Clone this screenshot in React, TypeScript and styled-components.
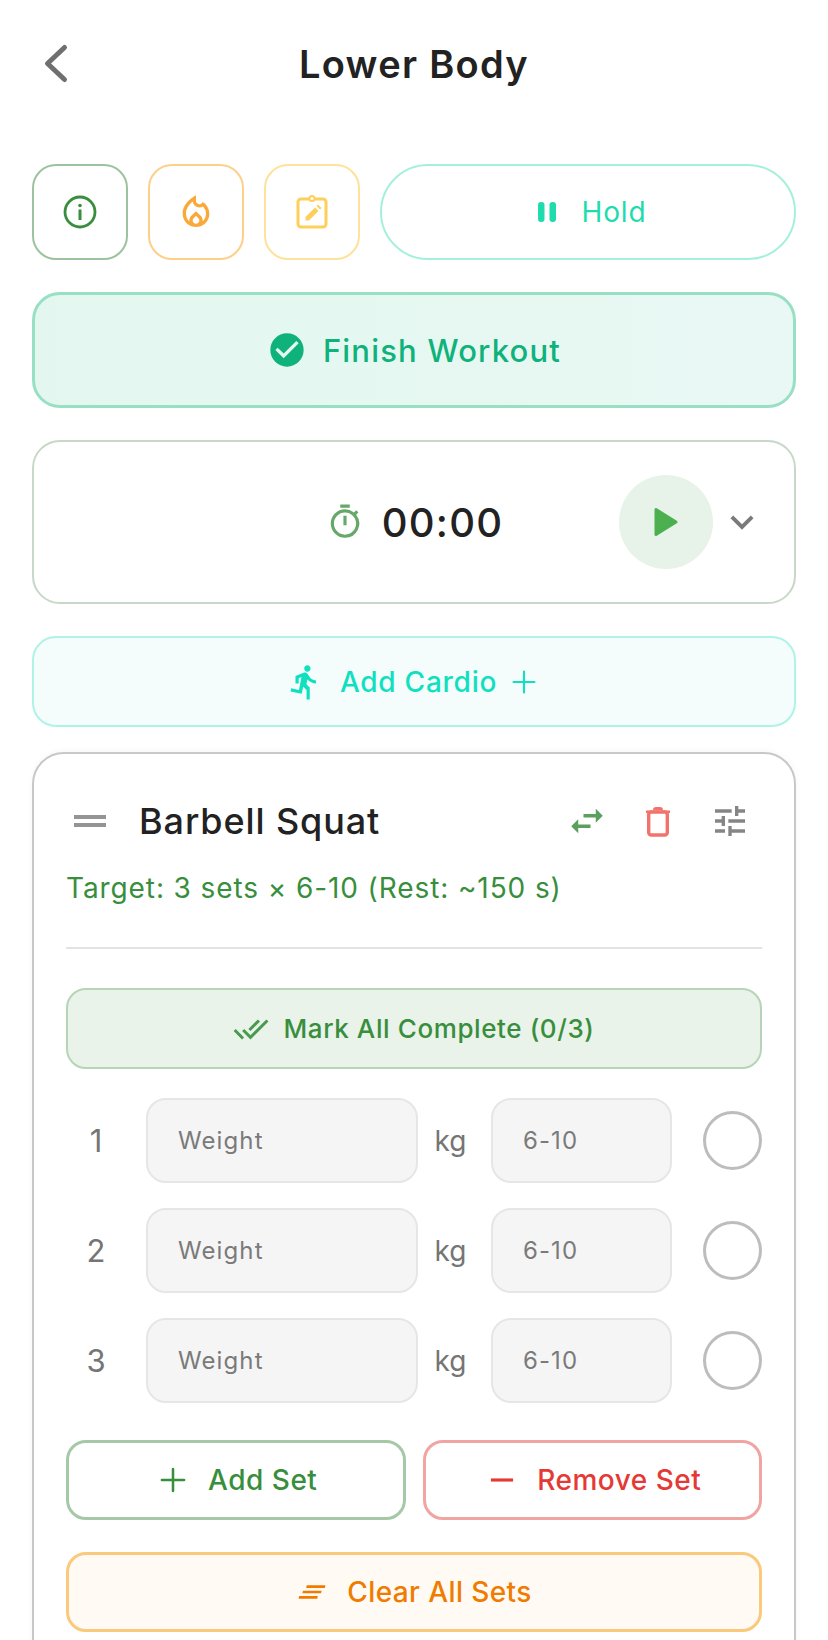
import React from "react";
import styled, { createGlobalStyle } from "styled-components";
import { Plus } from "lucide-react";
import {
  MdCheckCircle,
  MdClearAll,
  MdDirectionsRun,
  MdDoneAll,
  MdDragHandle,
  MdExpandMore,
  MdOutlineLocalFireDepartment,
  MdOutlineTimer,
  MdRemove,
  MdSwapHoriz,
  MdTune,
} from "react-icons/md";

const FONT = `Inter, "Noto Sans", "Liberation Sans", sans-serif`;

const GlobalStyle = createGlobalStyle`
  html, body {
    margin: 0;
    padding: 0;
    background: #fff;
    overflow: hidden;
  }
  * {
    box-sizing: border-box;
  }
`;

const SETS = [1, 2, 3];

const BackIcon = () => (
  <svg width="30" height="42" viewBox="0 0 30 42" fill="none">
    <path d="M23.5 4.5 L6.5 20.5 L23.5 36.5" stroke="#6f6f6f" strokeWidth="5" strokeLinecap="round" strokeLinejoin="round" />
  </svg>
);

const InfoIcon = () => (
  <svg width="36" height="36" viewBox="0 0 36 36" fill="none">
    <circle cx="18" cy="18" r="15" stroke="#388e3c" strokeWidth="2.8" />
    <circle cx="18" cy="11.5" r="1.8" fill="#388e3c" />
    <rect x="16.5" y="15.5" width="3" height="10.5" fill="#388e3c" />
  </svg>
);

const NoteIcon = () => (
  <svg width="36" height="36" viewBox="0 0 36 36" fill="none">
    <rect x="4" y="5" width="28" height="28" rx="3" stroke="#fcd05a" strokeWidth="3" />
    <circle cx="18" cy="4.5" r="2.6" stroke="#fcd05a" strokeWidth="2" fill="#fff" />
    <path d="M11.5 26.5 v-3.5 L21 13.5 l3.5 3.5 L15 26.5 z M22.5 12 l1.5 -1.5 l3.5 3.5 l-1.5 1.5 z" fill="#fcd05a" />
  </svg>
);

const PauseIcon = () => (
  <svg width="20" height="22" viewBox="0 0 20 22" fill="#1fdcae">
    <rect x="1" y="1" width="6.5" height="20" rx="3" />
    <rect x="12.5" y="1" width="6.5" height="20" rx="3" />
  </svg>
);

const PlayIcon = () => (
  <svg width="30" height="34" viewBox="0 0 30 34" fill="#4caf50" stroke="#4caf50" strokeWidth="3" strokeLinejoin="round">
    <path d="M5 4.5 V29.5 L25 17 z" />
  </svg>
);

const TrashIcon = () => (
  <svg width="28" height="32" viewBox="0 0 28 32" fill="none">
    <path d="M1 5.5 H25 V8 H1 z M8 5 Q8 2 11 2 H15 Q18 2 18 5 z" fill="#f2726c" />
    <rect x="3.7" y="7" width="18.6" height="23" rx="2.5" stroke="#f2726c" strokeWidth="3.4" />
  </svg>
);

export default function App() {
  return (
    <Page>
      <GlobalStyle />
      <Header>
        <BackButton>
          <BackIcon />
        </BackButton>
        <Title>Lower Body</Title>
      </Header>

      <Content>
        <ActionRow>
          <SquareButton $border="#9cc29e">
            <InfoIcon />
          </SquareButton>
          <SquareButton $border="#fdd08a">
            <MdOutlineLocalFireDepartment size={40} color="#f9a93a" />
          </SquareButton>
          <SquareButton $border="#fde29c">
            <NoteIcon />
          </SquareButton>
          <HoldButton>
            <PauseIcon />
            Hold
          </HoldButton>
        </ActionRow>

        <FinishButton>
          <MdCheckCircle size={40} color="#10b27c" />
          Finish Workout
        </FinishButton>

        <TimerCard>
          <span />
          <TimerGroup>
            <MdOutlineTimer size={38} color="#66a76a" />
            <TimerText>00:00</TimerText>
          </TimerGroup>
          <TimerControls>
            <PlayButton>
              <PlayIcon />
            </PlayButton>
            <MdExpandMore size={46} color="#7a7a7a" />
          </TimerControls>
        </TimerCard>

        <CardioButton>
          <MdDirectionsRun size={38} color="#10e0c0" />
          <span>Add Cardio</span>
          <CardioPlus>
            <Plus size={36} color="#10e0c0" strokeWidth={1.4} />
          </CardioPlus>
        </CardioButton>

        <ExerciseCard>
          <ExerciseHeader>
            <MdDragHandle size={48} color="#949494" />
            <ExerciseName>Barbell Squat</ExerciseName>
            <ExerciseTools>
              <MdSwapHoriz size={42} color="#5a9f5e" />
              <TrashIcon />
              <MdTune size={40} color="#858585" />
            </ExerciseTools>
          </ExerciseHeader>
          <TargetText>Target: 3 sets × 6-10 (Rest: ~150 s)</TargetText>
          <Divider />

          <MarkAllButton>
            <MdDoneAll size={36} color="#4a9a4e" />
            Mark All Complete (0/3)
          </MarkAllButton>

          <SetList>
            {SETS.map((n) => (
              <SetRow key={n}>
                <SetNumber>{n}</SetNumber>
                <SetInput placeholder="Weight" readOnly />
                <Unit>kg</Unit>
                <SetInput placeholder="6-10" readOnly />
                <CheckCircle />
              </SetRow>
            ))}
          </SetList>

          <SetButtons>
            <OutlineButton $border="#a5c9a6" $color="#388e3c">
              <Plus size={38} strokeWidth={1.6} />
              Add Set
            </OutlineButton>
            <OutlineButton $border="#f0a5a2" $color="#e53935">
              <MdRemove size={38} />
              Remove Set
            </OutlineButton>
          </SetButtons>

          <ClearButton>
            <MdClearAll size={32} style={{ transform: "skewX(-12deg)" }} />
            Clear All Sets
          </ClearButton>
        </ExerciseCard>
      </Content>
    </Page>
  );
}

const Page = styled.div`
  width: 828px;
  height: 1640px;
  overflow: hidden;
  background: #fff;
  font-family: ${FONT};
`;

const Header = styled.header`
  display: flex;
  align-items: center;
  justify-content: center;
  position: relative;
  height: 128px;
`;

const BackButton = styled.div`
  position: absolute;
  left: 41px;
  top: 43px;
  display: flex;
`;

const Title = styled.h1`
  margin: 0;
  font-size: 38px;
  font-weight: 600;
  letter-spacing: 1.3px;
  color: #222;
`;

const Content = styled.main`
  display: flex;
  flex-direction: column;
  padding: 36px 32px 0;
`;

const ActionRow = styled.div`
  display: flex;
  gap: 20px;
  height: 96px;
`;

const SquareButton = styled.div<{ $border: string }>`
  flex: none;
  display: flex;
  align-items: center;
  justify-content: center;
  width: 96px;
  height: 96px;
  border: 2px solid ${(p) => p.$border};
  border-radius: 24px;
  background: #fff;
`;

const HoldButton = styled.div`
  flex: 1;
  display: flex;
  align-items: center;
  justify-content: center;
  gap: 24px;
  padding-left: 8px;
  border: 2px solid #a5f0dc;
  border-radius: 48px;
  font-size: 28px;
  letter-spacing: 0.9px;
  color: #1fdcae;
`;

const FinishButton = styled.div`
  display: flex;
  align-items: center;
  justify-content: center;
  gap: 16px;
  height: 116px;
  margin-top: 32px;
  border: 3px solid #98e0c4;
  border-radius: 28px;
  background: linear-gradient(90deg, #e3f7f0, #e9f8f4);
  font-size: 31px;
  font-weight: 550;
  letter-spacing: 1.2px;
  color: #10b27c;
`;

const TimerCard = styled.section`
  display: grid;
  grid-template-columns: 1fr auto 1fr;
  align-items: center;
  height: 164px;
  margin-top: 32px;
  padding: 0 29px 0 30px;
  border: 2px solid #c8d8c8;
  border-radius: 28px;
`;

const TimerGroup = styled.div`
  display: flex;
  align-items: center;
  gap: 18px;
`;

const TimerText = styled.div`
  font-size: 40px;
  font-weight: 500;
  letter-spacing: 1.2px;
  color: #222;
`;

const TimerControls = styled.div`
  display: flex;
  align-items: center;
  justify-content: flex-end;
  gap: 6px;
`;

const PlayButton = styled.div`
  display: flex;
  align-items: center;
  justify-content: center;
  width: 94px;
  height: 94px;
  border-radius: 50%;
  background: #e7f3e8;
`;

const CardioButton = styled.div`
  display: flex;
  align-items: center;
  justify-content: center;
  gap: 16px;
  height: 91px;
  margin-top: 32px;
  border: 2px solid #aef3e6;
  border-radius: 24px;
  background: #f4fdfc;
  font-size: 28px;
  font-weight: 500;
  letter-spacing: 0.75px;
  color: #10e0c0;
`;

const CardioPlus = styled.span`
  display: flex;
  margin-left: -7px;
`;

const ExerciseCard = styled.section`
  display: flex;
  flex-direction: column;
  margin-top: 25px;
  padding: 33px 32px 40px;
  border: 2px solid #c8c8c8;
  border-radius: 32px;
  box-shadow: 0 -1px 6px rgba(0, 0, 0, 0.04);
`;

const ExerciseHeader = styled.div`
  display: flex;
  align-items: center;
  height: 68px;
`;

const ExerciseName = styled.h2`
  flex: 1;
  margin: 0 0 0 25px;
  font-size: 36px;
  font-weight: 500;
  letter-spacing: 0.9px;
  color: #222;
`;

const ExerciseTools = styled.div`
  display: flex;
  align-items: center;
  gap: 37px;
  padding-right: 12px;
`;

const TargetText = styled.div`
  margin-top: 16px;
  font-size: 28px;
  letter-spacing: 0.9px;
  color: #388e3c;
`;

const Divider = styled.hr`
  width: 100%;
  margin: 42px 0 0;
  border: 0;
  border-top: 2px solid #e3e3e3;
`;

const MarkAllButton = styled.div`
  display: flex;
  align-items: center;
  justify-content: center;
  gap: 14px;
  height: 81px;
  margin-top: 39px;
  border: 2px solid #b5d5b6;
  border-radius: 20px;
  background: #e9f3ea;
  font-size: 26px;
  font-weight: 500;
  letter-spacing: 0.6px;
  color: #388e3c;
`;

const SetList = styled.div`
  display: flex;
  flex-direction: column;
  gap: 25px;
  margin-top: 29px;
`;

const SetRow = styled.div`
  display: grid;
  grid-template-columns: 80px 272px 73px 181px 1fr;
  align-items: center;
`;

const SetNumber = styled.div`
  width: 60px;
  text-align: center;
  font-size: 31px;
  color: #757575;
`;

const SetInput = styled.input`
  width: 100%;
  height: 85px;
  padding: 0 30px;
  border: 2px solid #e6e6e6;
  border-radius: 20px;
  outline: none;
  background: #f5f5f5;
  font-family: ${FONT};
  font-size: 24px;
  letter-spacing: 1.1px;

  &::placeholder {
    color: #7a7a7a;
    opacity: 1;
  }
`;

const Unit = styled.div`
  padding-right: 8px;
  text-align: center;
  font-size: 28px;
  color: #757575;
`;

const CheckCircle = styled.div`
  justify-self: end;
  width: 59px;
  height: 59px;
  border: 3px solid #bdbdbd;
  border-radius: 50%;
`;

const SetButtons = styled.div`
  display: grid;
  grid-template-columns: 1fr 1fr;
  gap: 17px;
  margin-top: 37px;
`;

const OutlineButton = styled.div<{ $border: string; $color: string }>`
  display: flex;
  align-items: center;
  justify-content: center;
  gap: 16px;
  height: 80px;
  border: 3px solid ${(p) => p.$border};
  border-radius: 20px;
  font-size: 28px;
  font-weight: 500;
  letter-spacing: 0.5px;
  color: ${(p) => p.$color};
`;

const ClearButton = styled.div`
  display: flex;
  align-items: center;
  justify-content: center;
  gap: 19px;
  height: 80px;
  margin-top: 32px;
  border: 3px solid #fbc97c;
  border-radius: 20px;
  background: #fffaf3;
  font-size: 28px;
  font-weight: 500;
  letter-spacing: 0.4px;
  color: #ef7c00;
`;
